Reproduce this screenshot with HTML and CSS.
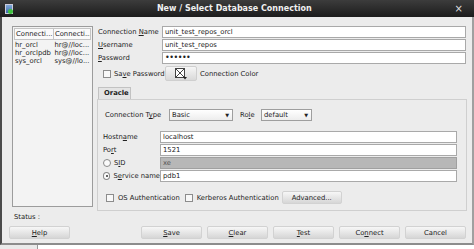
FILE: index.html
```html
<!DOCTYPE html>
<html lang="en">
<head>
  <meta charset="UTF-8">
  <title>New / Select Database Connection</title>
  <link rel="stylesheet" href="styles.css">
</head>
<body>

  <div class="window">
    <div class="titlebar">
      <span class="app-icon"><span class="app-dot"></span></span>
      <span class="title">New / Select Database Connection</span>
      <span class="close">&#215;</span>
    </div>

    <div class="body">
      <div class="main">
        <!-- Saved connections -->
        <div class="conn-list">
          <div class="list-head">
            <span class="col">Connecti...</span>
            <span class="col">Connecti...</span>
          </div>
          <div class="list-row"><span class="col">hr_orcl</span><span class="col">hr@//loc...</span></div>
          <div class="list-row"><span class="col">hr_orclpdb</span><span class="col">hr@//loc...</span></div>
          <div class="list-row"><span class="col">sys_orcl</span><span class="col">sys@//lo...</span></div>
        </div>

        <div class="form">
          <div class="field-row">
            <label>Connection <u>N</u>ame</label>
            <div class="input">unit_test_repos_orcl</div>
          </div>
          <div class="field-row">
            <label><u>U</u>sername</label>
            <div class="input">unit_test_repos</div>
          </div>
          <div class="field-row">
            <label><u>P</u>assword</label>
            <div class="input dots">&#8226;&#8226;&#8226;&#8226;&#8226;&#8226;</div>
          </div>

          <div class="save-row">
            <span class="check"></span>
            <span class="save-label">Sa<u>v</u>e Password</span>
            <button class="color-btn">
              <svg width="14" height="12" viewBox="0 0 14 12">
                <rect x="1.5" y="0.5" width="9" height="9" fill="#fff" stroke="#444"/>
                <path d="M2 1 L10 9 M10 1 L2 9" stroke="#444" stroke-width="1"/>
                <path d="M9 9 L13 9 L11 11.5 Z" fill="#222"/>
              </svg>
            </button>
            <span class="color-label">Connection Color</span>
          </div>

          <div class="tabs">
            <span class="tab">Oracle</span>
          </div>
          <div class="tab-panel">
            <div class="type-row">
              <label>Connection T<u>y</u>pe</label>
              <div class="select type-select">Basic<span class="arrow">&#9660;</span></div>
              <label class="role-label">Ro<u>l</u>e</label>
              <div class="select role-select">default<span class="arrow">&#9660;</span></div>
            </div>

            <div class="host-rows">
              <div class="host-row">
                <label>Hostn<u>a</u>me</label>
                <div class="input">localhost</div>
              </div>
              <div class="host-row">
                <label>Po<u>r</u>t</label>
                <div class="input">1521</div>
              </div>
              <div class="host-row">
                <label><span class="radio"></span>S<u>I</u>D</label>
                <div class="input disabled">xe</div>
              </div>
              <div class="host-row">
                <label><span class="radio on"></span>S<u>e</u>rvice name</label>
                <div class="input">pdb1</div>
              </div>
            </div>

            <div class="auth-row">
              <span class="check"></span>
              <span class="auth-label">OS Authentication</span>
              <span class="check"></span>
              <span class="auth-label">Kerberos Authentication</span>
              <button class="btn adv-btn">Advanced...</button>
            </div>
          </div>
        </div>
      </div>

      <div class="status">Status :</div>

      <div class="actions">
        <button class="btn help-btn"><u>H</u>elp</button>
        <div class="action-group">
          <button class="btn"><u>S</u>ave</button>
          <button class="btn"><u>C</u>lear</button>
          <button class="btn"><u>T</u>est</button>
          <button class="btn">Co<u>n</u>nect</button>
          <button class="btn">Cancel</button>
        </div>
      </div>
    </div>
  </div>

  <div class="desktop"><div class="task"></div></div>

</body>
</html>
```

FILE: styles.css
```css
body {
  margin: 0;
  width: 474px;
  height: 249px;
  overflow: hidden;
  font-family: 'DejaVu Sans', sans-serif;
  font-size: 6.8px;
  color: #222;
  background: #fff;
  white-space: nowrap;
}

u {
  text-decoration: underline;
  text-underline-offset: 1px;
}

.window {
  box-sizing: border-box;
  height: 245px;
  background: #ececec;
  border-left: 2px solid #4a4a4a;
  border-right: 2px solid #a0a0a0;
  border-bottom: 2px solid #8c8c8c;
  display: flex;
  flex-direction: column;
}

.titlebar {
  height: 17px;
  background: linear-gradient(#3c3c3c, #1c1c1c);
  display: flex;
  align-items: center;
  position: relative;
  margin-left: -2px;
  margin-right: -2px;
}

.app-icon {
  width: 8px;
  height: 10px;
  margin-left: 5px;
  background: linear-gradient(#7fa8d8, #3c6aa8);
  border: 1px solid #ccd;
  box-sizing: border-box;
  position: relative;
}

.app-dot {
  position: absolute;
  right: -1px;
  bottom: -1px;
  width: 5px;
  height: 5px;
  border-radius: 50%;
  background: #3fc43f;
}

.title {
  flex: 1;
  text-align: center;
  color: #f0f0f0;
  font-weight: bold;
  font-size: 8px;
  margin-left: 1px;
}

.close {
  color: #ddd;
  font-size: 10px;
  margin-right: 11px;
  line-height: 1;
}

.body {
  flex: 1;
  padding: 9px 6px 0 10px;
  display: flex;
  flex-direction: column;
}

.main {
  display: flex;
  gap: 4px;
}

/* connection list */
.conn-list {
  box-sizing: border-box;
  width: 81px;
  height: 181px;
  border: 1px solid #9c9c9c;
  background: #f3f3f3;
  padding: 1px;
}

.list-head {
  display: flex;
  height: 10px;
  border: 1px solid #c4c4c4;
  background: #fafafa;
  margin-bottom: 1px;
}

.list-head .col {
  line-height: 10px;
}

.list-head .col:first-child {
  border-right: 1px solid #c4c4c4;
}

.list-row {
  display: flex;
  height: 8px;
  line-height: 8px;
}

.col {
  width: 37px;
  padding-left: 1px;
  overflow: hidden;
}

.col:first-child {
  width: 39px;
}

/* form */
.form {
  flex: 1;
  display: flex;
  flex-direction: column;
}

.field-row {
  display: flex;
  align-items: center;
  height: 12px;
  margin-bottom: 1px;
}

.field-row label {
  width: 64px;
  padding-left: 1px;
}

.input {
  box-sizing: border-box;
  height: 12px;
  flex: 1;
  background: #fff;
  border: 1px solid #a9a9a9;
  line-height: 10px;
  padding-left: 2px;
}

.field-row .input {
  margin-right: 1px;
}

.dots {
  letter-spacing: -0.5px;
  font-size: 8px;
}

.save-row {
  display: flex;
  align-items: center;
  height: 15px;
  margin-top: 1px;
  padding-left: 6px;
}

.check {
  box-sizing: border-box;
  width: 8px;
  height: 8px;
  border: 1px solid #8c8c8c;
  background: #f8f8f8;
}

.save-label {
  margin-left: 3px;
  width: 51px;
}

.color-btn {
  box-sizing: border-box;
  width: 32px;
  height: 15px;
  padding: 0;
  border: 1px solid #cfcfcf;
  border-radius: 2px;
  background: linear-gradient(#f6f6f6, #d9d9d9);
  display: flex;
  align-items: center;
  justify-content: center;
}

.color-label {
  margin-left: 3px;
}

.tabs {
  display: flex;
  margin-top: 6px;
  padding-left: 1px;
}

.tab {
  box-sizing: border-box;
  width: 33px;
  height: 12px;
  line-height: 11px;
  padding-left: 5px;
  font-weight: bold;
  background: #e4e4e4;
  border: 1px solid #c2c2c2;
  border-bottom: none;
}

.tab-panel {
  box-sizing: border-box;
  width: 370px;
  height: 112px;
  border: 1px solid #cfcfcf;
  padding: 9px 0 0 5px;
}

.type-row {
  display: flex;
  align-items: center;
  height: 12px;
  padding-left: 2px;
}

.type-row label {
  width: 64px;
}

.select {
  box-sizing: border-box;
  height: 12px;
  border: 1px solid #9e9e9e;
  background: linear-gradient(#fff, #ededed);
  line-height: 10px;
  padding-left: 2px;
  display: flex;
  justify-content: space-between;
}

.arrow {
  font-size: 5px;
  margin-right: 3px;
  color: #222;
}

.type-select {
  width: 64px;
}

.role-label.role-label {
  width: 21px;
  margin-left: 7px;
}

.role-select {
  width: 51px;
}

.host-rows {
  margin-top: 10px;
  display: flex;
  flex-direction: column;
  gap: 1px;
}

.host-row {
  display: flex;
  align-items: center;
  height: 12px;
  width: 354px;
}

.host-row label {
  width: 57px;
  display: flex;
  align-items: center;
}

.radio {
  box-sizing: border-box;
  width: 8px;
  height: 8px;
  border-radius: 50%;
  border: 1px solid #8a8a8a;
  background: #fafafa;
  margin-right: 3px;
  position: relative;
}

.radio.on::after {
  content: "";
  position: absolute;
  left: 2px;
  top: 2px;
  width: 2px;
  height: 2px;
  border-radius: 50%;
  background: #333;
}

.input.disabled {
  background: #b7b7b7;
  color: #555;
  border-color: #a0a0a0;
}

.auth-row {
  display: flex;
  align-items: center;
  height: 13px;
  margin-top: 9px;
  padding-left: 3px;
}

.auth-label {
  margin-left: 4px;
  margin-right: 5px;
}

.btn {
  box-sizing: border-box;
  height: 13px;
  padding: 0;
  font-family: 'DejaVu Sans', sans-serif;
  font-size: 6.8px;
  color: #222;
  border: 1px solid #d2d2d2;
  border-radius: 2px;
  background: linear-gradient(#f7f7f7, #d6d6d6);
}

.adv-btn {
  width: 60px;
  margin-left: -2px;
}

.status {
  height: 13px;
  line-height: 9px;
  margin-top: 2px;
  padding-left: 2px;
}

.actions {
  display: flex;
  justify-content: space-between;
  margin-left: -3px;
}

.actions .btn {
  width: 61px;
}

.action-group {
  display: flex;
  gap: 5px;
}

.desktop {
  height: 4px;
  background: #fff;
}

.task {
  width: 37px;
  height: 4px;
  background: #eaeaea;
  border-right: 1px solid #999;
}
```
